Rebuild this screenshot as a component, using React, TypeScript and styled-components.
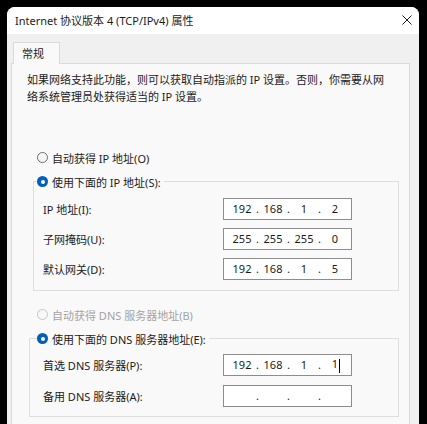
import React from "react";
import styled, { createGlobalStyle } from "styled-components";

const GlobalStyle = createGlobalStyle`
  html, body {
    margin: 0;
    padding: 0;
    background: #000;
    overflow: hidden;
  }
  body {
    font-family: "Noto Sans", "Noto Sans CJK SC", sans-serif;
    font-size: 11px;
    color: #1b1b1b;
  }
`;

const Window = styled.div`
  margin: 7px 0 0 7px;
  width: 412px;
  height: 417px;
  border-radius: 8px 8px 0 0;
  overflow: hidden;
  background: #f0f0f0;
  display: flex;
  flex-direction: column;
`;

const TitleBar = styled.div`
  flex: none;
  height: 27px;
  background: #fff;
  display: flex;
  align-items: center;
  justify-content: space-between;
  padding: 0 7px 0 8px;
`;

const Title = styled.span`
  line-height: 14px;
  padding-top: 1px;
`;

const CloseButton = styled.span`
  display: flex;
  width: 10px;
  height: 10px;
  margin-top: -2px;
`;

const Body = styled.div`
  flex: 1;
  min-height: 0;
  display: flex;
  flex-direction: column;
  padding: 8px 9px 0 4px;
`;

const Tab = styled.div`
  position: relative;
  z-index: 1;
  align-self: flex-start;
  margin: 0 0 -1px 2px;
  height: 21px;
  line-height: 21px;
  padding: 0 15px 0 8px;
  background: #f9f9f9;
  border: 1px solid #dadada;
  border-bottom: none;
`;

const Panel = styled.div`
  flex: 1;
  min-height: 0;
  overflow: hidden;
  background: #f9f9f9;
  border: 1px solid #dadada;
  border-bottom: none;
  padding: 7px 0 0 15px;
`;

const Description = styled.p`
  margin: 0;
  line-height: 17px;
`;

const RadioRow = styled.label<{ $top: number; $left: number; $disabled?: boolean }>`
  display: flex;
  align-items: center;
  gap: 4px;
  height: 17px;
  margin: ${({ $top, $left }) => `${$top}px 0 0 ${$left}px`};
  color: ${({ $disabled }) => ($disabled ? "#a3a3a3" : "inherit")};
`;

const RadioDot = styled.span<{ $checked?: boolean; $disabled?: boolean }>`
  box-sizing: border-box;
  width: 11px;
  height: 11px;
  border-radius: 50%;
  flex: none;
  display: flex;
  align-items: center;
  justify-content: center;
  background: ${({ $checked }) => ($checked ? "#005fb8" : "#f7f7f7")};
  border: ${({ $checked, $disabled }) =>
    $checked ? "none" : `1px solid ${$disabled ? "#c6c6c6" : "#6e6e6e"}`};

  &::after {
    content: "";
    display: ${({ $checked }) => ($checked ? "block" : "none")};
    width: 4px;
    height: 4px;
    border-radius: 50%;
    background: #fff;
  }
`;

const Group = styled.fieldset<{ $left: number }>`
  margin: 7px 10px 0 ${({ $left }) => $left}px;
  padding: 0;
  border: 1px solid #dedede;
  min-inline-size: 0;
`;

const Legend = styled.legend<{ $left: number }>`
  margin-left: ${({ $left }) => $left}px;
  padding: 0 3px 0 0;
  background: #f9f9f9;
`;

const Rows = styled.div<{ $pad: string; $gap: number }>`
  display: grid;
  grid-template-columns: 1fr 129px;
  grid-auto-rows: 22px;
  row-gap: ${({ $gap }) => $gap}px;
  align-items: center;
  padding: ${({ $pad }) => $pad};
`;

const FieldLabel = styled.span`
  line-height: 17px;
`;

const IpBox = styled.div`
  box-sizing: border-box;
  height: 22px;
  background: #fff;
  border: 1px solid #8d8d8d;
  display: flex;
  align-items: center;
  padding-left: 6px;
  font-size: 11px;
  color: #1b1b1b;
`;

const Octet = styled.span`
  width: 24px;
  text-align: center;
  line-height: 14px;
`;

const Dot = styled.span`
  width: 7px;
  text-align: center;
  line-height: 14px;
`;

const Caret = styled.span`
  display: inline-block;
  width: 1px;
  height: 14px;
  margin: 0 -2px 0 1px;
  background: #000;
  vertical-align: middle;
`;

const CloseIcon = () => (
  <svg width="10" height="10" viewBox="0 0 10 10">
    <path d="M0.5 0.5 L9.5 9.5 M9.5 0.5 L0.5 9.5" stroke="#1b1b1b" strokeWidth="1" />
  </svg>
);

const IpInput = ({ value, caret }: { value: string[]; caret?: boolean }) => (
  <IpBox>
    {value.map((part, i) => (
      <React.Fragment key={i}>
        <Octet>
          {part}
          {caret && i === 3 && <Caret />}
        </Octet>
        {i < 3 && <Dot>.</Dot>}
      </React.Fragment>
    ))}
  </IpBox>
);

const Radio = ({
  label,
  checked,
  disabled,
  top = 0,
  left = 0,
}: {
  label: string;
  checked?: boolean;
  disabled?: boolean;
  top?: number;
  left?: number;
}) => (
  <RadioRow $top={top} $left={left} $disabled={disabled}>
    <RadioDot $checked={checked} $disabled={disabled} />
    {label}
  </RadioRow>
);

const ipRows = [
  { label: "IP 地址(I):", value: ["192", "168", "1", "2"] },
  { label: "子网掩码(U):", value: ["255", "255", "255", "0"] },
  { label: "默认网关(D):", value: ["192", "168", "1", "5"] },
];

const dnsRows = [
  { label: "首选 DNS 服务器(P):", value: ["192", "168", "1", "1"], caret: true },
  { label: "备用 DNS 服务器(A):", value: ["", "", "", ""] },
];

export default function App() {
  return (
    <>
      <GlobalStyle />
      <Window>
        <TitleBar>
          <Title>Internet 协议版本 4 (TCP/IPv4) 属性</Title>
          <CloseButton>
            <CloseIcon />
          </CloseButton>
        </TitleBar>
        <Body>
          <Tab>常规</Tab>
          <Panel>
            <Description>
              如果网络支持此功能，则可以获取自动指派的 IP 设置。否则，你需要从网
              <br />
              络系统管理员处获得适当的 IP 设置。
            </Description>

            <Radio top={44} left={10} label="自动获得 IP 地址(O)" />
            <Group $left={6}>
              <Legend $left={3}>
                <Radio checked label="使用下面的 IP 地址(S):" />
              </Legend>
              <Rows $pad="8px 46px 10px 9px" $gap={8}>
                {ipRows.map((row) => (
                  <React.Fragment key={row.label}>
                    <FieldLabel>{row.label}</FieldLabel>
                    <IpInput value={row.value} />
                  </React.Fragment>
                ))}
              </Rows>
            </Group>

            <Radio top={15} left={10} disabled label="自动获得 DNS 服务器地址(B)" />
            <Group $left={2}>
              <Legend $left={7}>
                <Radio checked label="使用下面的 DNS 服务器地址(E):" />
              </Legend>
              <Rows $pad="7px 46px 9px 13px" $gap={9}>
                {dnsRows.map((row) => (
                  <React.Fragment key={row.label}>
                    <FieldLabel>{row.label}</FieldLabel>
                    <IpInput value={row.value} caret={row.caret} />
                  </React.Fragment>
                ))}
              </Rows>
            </Group>
          </Panel>
        </Body>
      </Window>
    </>
  );
}
